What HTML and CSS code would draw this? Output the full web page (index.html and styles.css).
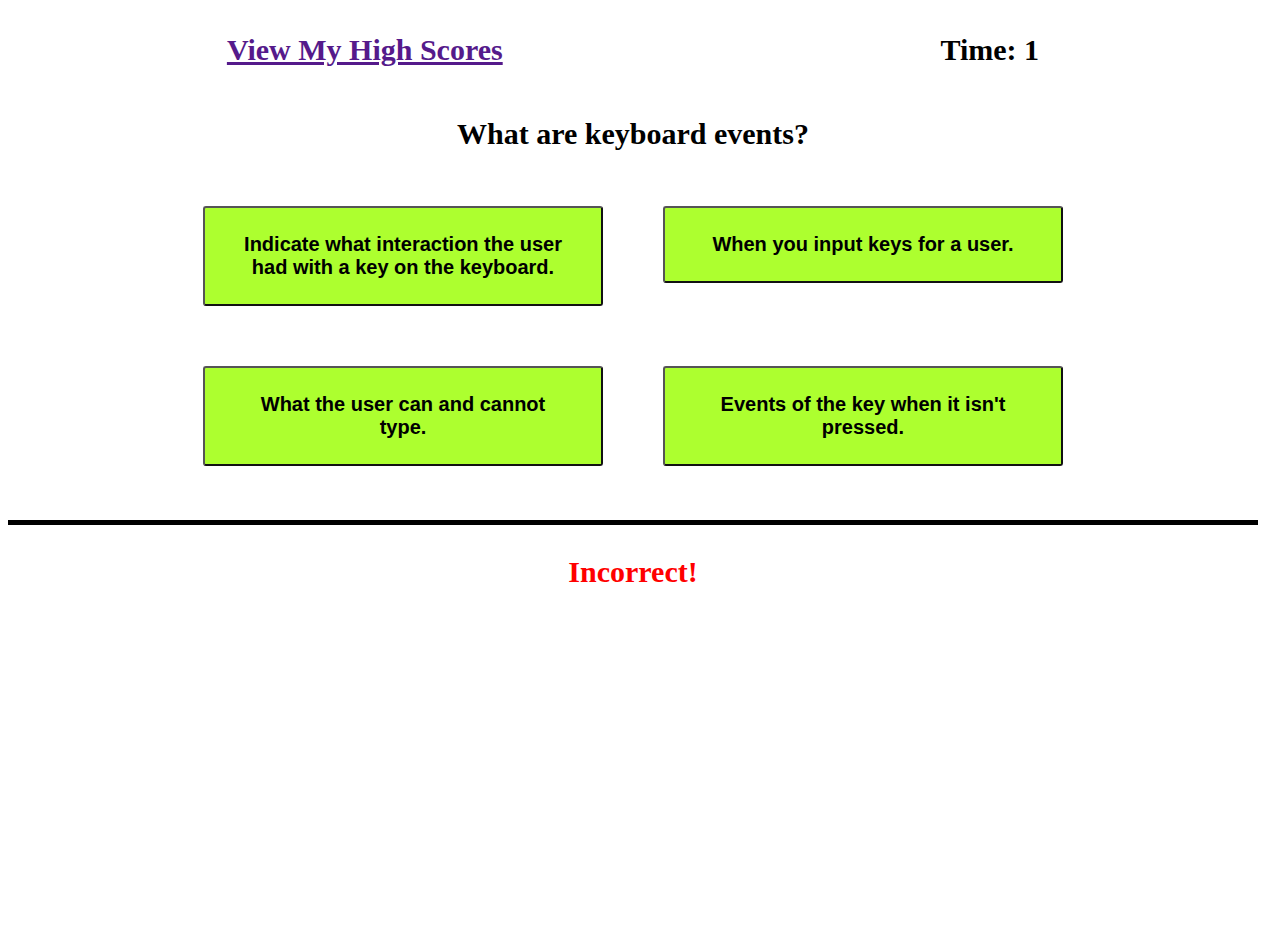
FILE: index.html
```html
<!DOCTYPE html>
<html lang="en">
<head>
<meta charset="utf-8">
<title>Code Quiz</title>
<link rel="stylesheet" href="styles.css">
</head>
<body>
<header class="top-bar">
  <a class="scores-link" href="#">View My High Scores</a>
  <div class="timer">Time: 1</div>
</header>
<main class="quiz">
  <h2 class="question">What are keyboard events?</h2>
  <div class="answers">
    <button class="answer">Indicate what interaction the user had with a key on the keyboard.</button>
    <button class="answer">When you input keys for a user.</button>
    <button class="answer">What the user can and cannot type.</button>
    <button class="answer">Events of the key when it isn't pressed.</button>
  </div>
</main>
<div class="divider"></div>
<p class="feedback">Incorrect!</p>
</body>
</html>
```
FILE: styles.css
```css
body {
  margin: 8px;
  font-family: "Liberation Serif", "Times New Roman", serif;
  background: #fff;
  color: #000;
}

.top-bar {
  display: flex;
  justify-content: space-around;
  align-items: center;
  margin-top: 25px;
  font-size: 30px;
  font-weight: bold;
  line-height: 34px;
}

.scores-link {
  color: #551a8b;
  text-decoration: underline;
}

.timer {
  color: #000;
}

.question {
  margin: 50px 0 0;
  text-align: center;
  font-size: 30px;
  font-weight: bold;
  line-height: 34px;
}

.answers {
  display: grid;
  grid-template-columns: 400px 400px;
  justify-content: center;
  align-items: start;
  column-gap: 60px;
  row-gap: 60px;
  margin-top: 55px;
}

.answer {
  box-sizing: border-box;
  width: 400px;
  padding: 25px 35px;
  background: #adff2f;
  border: 2px solid;
  border-color: #555 #111 #111 #555;
  border-radius: 3px;
  font-family: "Liberation Sans", Arial, sans-serif;
  font-size: 20px;
  font-weight: bold;
  line-height: 23px;
  color: #000;
  text-align: center;
  cursor: pointer;
}

.divider {
  height: 5px;
  background: #000;
  margin-top: 54px;
}

.feedback {
  margin: 30px 0 0;
  text-align: center;
  font-size: 30px;
  font-weight: bold;
  line-height: 34px;
  color: #ff0000;
}
```
